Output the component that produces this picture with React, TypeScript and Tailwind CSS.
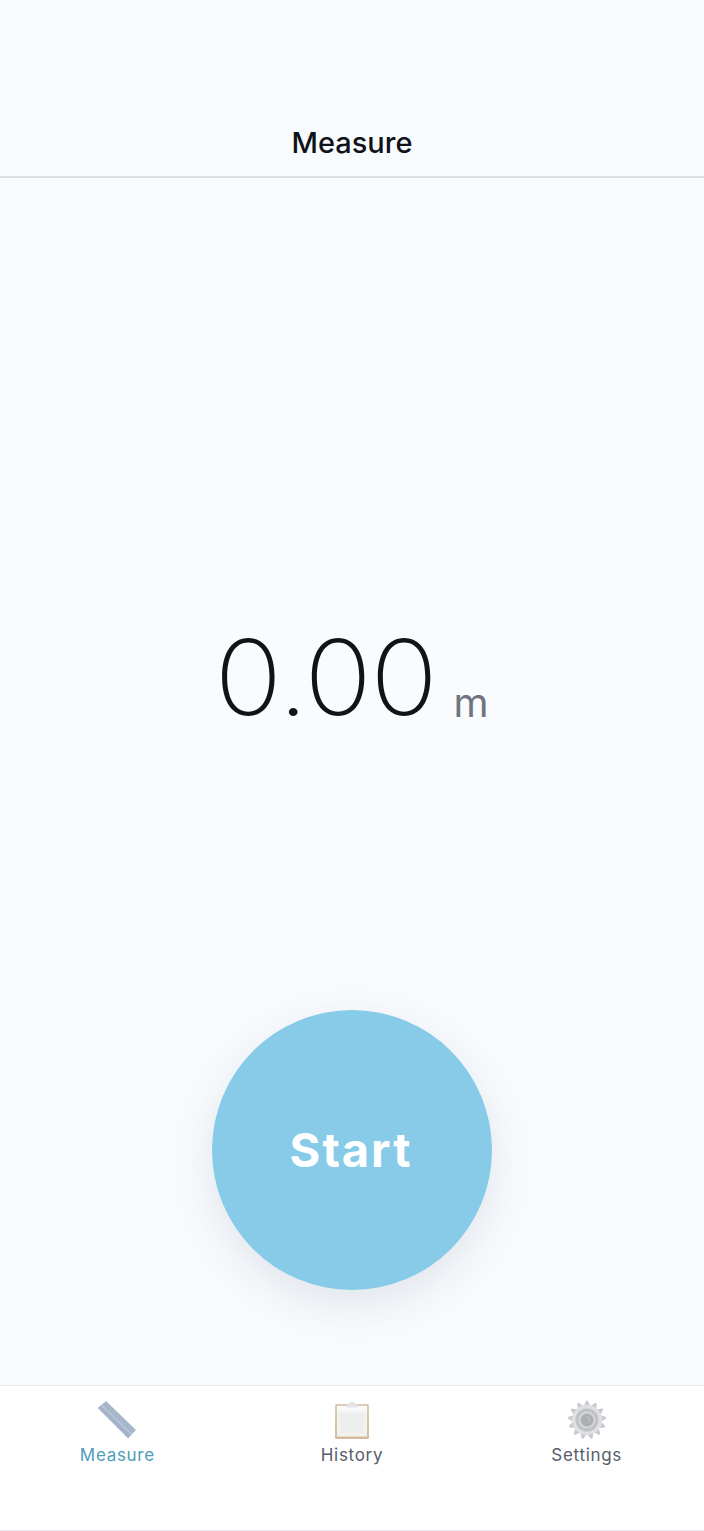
import React from 'react'

function RulerIcon() {
  return (
    <svg width="40" height="40" viewBox="0 0 40 40" className="block">
      <path d="M1 8 L9 1 L39 30 L31 38 Z" fill="#a7b6cb" />
      <path d="M1 8 L4.2 5.2 L34.6 34.4 L31 38 Z" fill="#a3b3ca" />
      <path d="M4.2 5.2 L34.6 34.4" stroke="#b9c6d8" strokeWidth="1.6" fill="none" />
    </svg>
  )
}

function ClipboardIcon() {
  return (
    <svg width="40" height="40" viewBox="0 0 40 40" className="block">
      <defs>
        <linearGradient id="frameFill" x1="0" y1="0" x2="0" y2="1">
          <stop offset="0" stopColor="#dccdb6" />
          <stop offset="1" stopColor="#d4bc9e" />
        </linearGradient>
      </defs>
      <rect x="3" y="4" width="34" height="35" rx="1.5" fill="url(#frameFill)" />
      <rect x="5" y="6" width="30" height="30.5" fill="#f2f2f2" />
      <rect x="5" y="6" width="30" height="5" fill="#f9f9fa" />
      <rect x="8" y="13" width="24" height="20" fill="#eeeeee" />
      <path d="M14 6 L17 3 Q20 0 23 3 L26 6 L26 7.5 L14 7.5 Z" fill="#e4e4e7" />
    </svg>
  )
}

function GearIcon() {
  const teeth = Array.from({ length: 13 }, (_, i) => (i * 360) / 13)
  return (
    <svg width="40" height="40" viewBox="0 0 40 40" className="block">
      {teeth.map((a) => (
        <path key={a} d="M16.8 6 L19.2 0.8 L20.8 0.8 L23.2 6 Z" fill="#c8cad0" transform={`rotate(${a} 20 20)`} />
      ))}
      <circle cx="20" cy="20" r="15" fill="#dfe0e4" />
      <circle cx="20" cy="20" r="11.5" fill="#c0c1c6" />
      <circle cx="20" cy="20" r="8.5" fill="#d6d7db" />
      <circle cx="20" cy="20" r="6.5" fill="#adaeb4" />
      <path d="M18 16 A5 5 0 0 1 22.5 23.5 A5.5 5.5 0 0 0 18 16 Z" fill="#f7f7f8" />
    </svg>
  )
}

function TabItem({ label, active, children }: { label: string; active?: boolean; children: React.ReactNode }) {
  return (
    <div className="flex flex-1 flex-col items-center">
      {children}
      <span className={`mt-[3px] text-[17px] leading-[24px] tracking-[0.7px] ${active ? 'text-[#4e9cb8]' : 'text-[#565d6b]'}`}>
        {label}
      </span>
    </div>
  )
}

export default function App() {
  return (
    <div className="flex h-[1531px] flex-col bg-[#f8fbfe] font-['Inter','Liberation_Sans',sans-serif]">
      <header className="flex h-[178px] items-end justify-center border-b-2 border-[#dadde1] pb-[13px]">
        <h1 className="text-[29px] leading-[40px] font-medium text-[#0f1218]">Measure</h1>
      </header>

      <main className="flex flex-1 flex-col items-center pt-[387px]">
        <div className="flex h-[223px] w-[386px] items-center justify-center rounded-[40px] border border-[#fafcff] bg-[#f9fbff]">
          <span className="scale-y-[0.93] text-[112px] leading-[136px] font-[150] tracking-[-1.6px] text-[#101318]">0.00</span>
          <span className="mt-[52px] ml-[17px] mr-[1px] text-[40px] leading-[48px] text-[#6f7580]">m</span>
        </div>

        <button className="mt-[222px] flex h-[280px] w-[280px] items-center justify-center rounded-full bg-[#87cbe9] shadow-[0_14px_44px_rgba(60,70,90,0.12)]">
          <span className="mr-[2px] text-[47px] leading-[56px] font-bold tracking-[2px] text-white">Start</span>
        </button>
      </main>

      <nav className="flex h-[146px] border-t border-b border-t-[#e6e8ec] border-b-[#e6e8ec] bg-white pt-[14px]">
        <TabItem label="Measure" active>
          <RulerIcon />
        </TabItem>
        <TabItem label="History">
          <ClipboardIcon />
        </TabItem>
        <TabItem label="Settings">
          <GearIcon />
        </TabItem>
      </nav>
    </div>
  )
}
